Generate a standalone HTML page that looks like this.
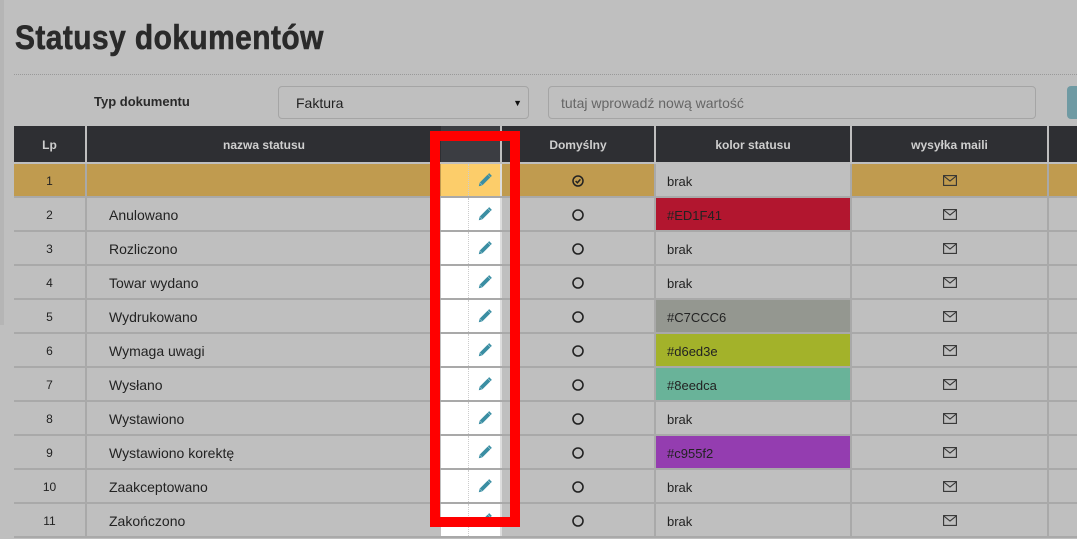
<!DOCTYPE html><html><head><meta charset="utf-8"><style>
*{margin:0;padding:0;box-sizing:border-box}
body{width:1077px;height:533px;overflow:hidden;background:#bfbfbf;font-family:"Liberation Sans",sans-serif;position:relative;color:#222}
.a{position:absolute}
h1{position:absolute;left:15px;top:19px;font-size:34px;font-weight:bold;color:#2a2a2a;transform:scaleX(0.88);transform-origin:0 0;letter-spacing:0.5px;-webkit-text-stroke:0.6px #2a2a2a}
.hdr{position:absolute;top:126px;height:36px;background:#2e2f33;color:#cfcfcf;font-size:12px;font-weight:bold;text-align:center;line-height:38px}
.c{position:absolute;height:32px;line-height:35px;font-size:14px}
.sep{position:absolute;background:#a9a9a9}
</style></head><body>
<div class="a" style="left:0;top:0;width:4px;height:325px;background:#b5b5b5"></div>
<h1>Statusy dokumentów</h1>
<div class="a" style="left:14px;top:74px;width:1063px;border-top:1px dotted #999"></div>
<div class="a" style="left:94px;top:94px;font-size:13px;font-weight:bold;color:#2a2a2a">Typ dokumentu</div>
<div class="a" style="left:278px;top:86px;width:251px;height:33px;border:1px solid #a5a5a5;border-radius:4px;font-size:14px;line-height:33px;padding-left:17px">Faktura<span style="position:absolute;right:6px;font-size:9px;color:#111">▼</span></div>
<div class="a" style="left:548px;top:86px;width:488px;height:33px;border:1px solid #a5a5a5;border-radius:4px;font-size:14px;line-height:33px;padding-left:12px;color:#666">tutaj wprowadź nową wartość</div>
<div class="a" style="left:1067px;top:86px;width:12px;height:33px;background:#6f9aa3;border-radius:4px 0 0 4px"></div>
<div class="hdr" style="left:14px;width:71px">Lp</div>
<div class="hdr" style="left:87px;width:354px">nazwa statusu</div>
<div class="hdr" style="left:441px;width:59px;background:#3b3d42"></div>
<div class="hdr" style="left:502px;width:152px">Domyślny</div>
<div class="hdr" style="left:656px;width:194px">kolor statusu</div>
<div class="hdr" style="left:852px;width:195px">wysyłka maili</div>
<div class="hdr" style="left:1049px;width:28px"></div>
<div id="rows"></div>
<script>
var names=["","Anulowano","Rozliczono","Towar wydano","Wydrukowano","Wymaga uwagi","Wysłano","Wystawiono","Wystawiono korektę","Zaakceptowano","Zakończono"];
var cols=[null,["#b2162f","#ED1F41"],null,null,["#949790","#C7CCC6"],["#a3b22a","#d6ed3e"],["#69b399","#8eedca"],null,["#943db0","#c955f2"],null,null];
var pen='<svg width="16" height="16" viewBox="0 0 18 18"><path d="M2 16 L3 12 L12 3 L15 6 L6 15 Z" fill="#3a8ea3"/><path d="M3 12 L6 15" stroke="#fff" stroke-opacity="0.4" stroke-width="0.8"/><path d="M13 2 L16 5" stroke="#3a8ea3" stroke-width="2"/></svg>';
var mail='<svg width="14" height="11" viewBox="0 0 14 11"><rect x="0.6" y="0.6" width="12.8" height="9.8" fill="none" stroke="#333" stroke-width="1.1"/><path d="M0.8 1 L7 6 L13.2 1" fill="none" stroke="#333" stroke-width="1.1"/></svg>';
var h="";
for(var i=0;i<11;i++){var t=164+i*34;var g=i==0;
var bg=g?"#c09b4f":"#bfbfbf";
h+='<div class="sep" style="left:14px;top:'+(t+32)+'px;width:1063px;height:2px"></div>';
h+='<div class="c" style="left:14px;top:'+t+'px;width:71px;text-align:center;font-size:12px;background:'+bg+'">'+(i+1)+'</div>';
h+='<div class="sep" style="left:85px;top:'+t+'px;width:2px;height:32px"></div>';
h+='<div class="c" style="left:87px;top:'+t+'px;width:354px;padding-left:22px;background:'+bg+'">'+names[i]+'</div>';
h+='<div class="c" style="left:441px;top:'+t+'px;width:59px;background:'+(g?"#fccd6a":"#fff")+'"><div style="position:absolute;left:27px;top:0;height:32px;border-left:1px dotted #ccc"></div><div style="position:absolute;left:36px;top:8px;line-height:0">'+pen+'</div></div>';
h+='<div class="sep" style="left:500px;top:'+t+'px;width:2px;height:32px;background:#ddd"></div>';
h+='<div class="c" style="left:502px;top:'+t+'px;width:152px;text-align:center;background:'+bg+'"><span style="position:relative;top:-1px">'+(g?'<svg width="12" height="12" viewBox="0 0 12 12" style="vertical-align:middle"><circle cx="6" cy="6" r="5" fill="none" stroke="#222" stroke-width="1.5"/><path d="M3.6 6 L5.4 7.8 L8.4 4.4" fill="none" stroke="#222" stroke-width="1.5"/></svg>':'<svg width="12" height="12" viewBox="0 0 12 12" style="vertical-align:middle"><circle cx="6" cy="6" r="5" fill="none" stroke="#222" stroke-width="1.6"/></svg>')+'</span></div>';
h+='<div class="sep" style="left:654px;top:'+t+'px;width:2px;height:32px"></div>';
var cc=cols[i];
h+='<div class="c" style="left:656px;top:'+t+'px;width:194px;padding-left:11px;font-size:13px;background:'+(cc?cc[0]:"#bfbfbf")+'">'+(cc?cc[1]:"brak")+'</div>';
h+='<div class="sep" style="left:850px;top:'+t+'px;width:2px;height:32px"></div>';
h+='<div class="c" style="left:852px;top:'+t+'px;width:195px;text-align:center;background:'+bg+'"><span style="position:relative;top:0px">'+mail+'</span></div>';
h+='<div class="sep" style="left:1047px;top:'+t+'px;width:2px;height:32px"></div>';
h+='<div class="c" style="left:1049px;top:'+t+'px;width:28px;background:'+bg+'"></div>';
}
document.getElementById("rows").innerHTML=h;
</script>
<div class="a" style="left:430px;top:131px;width:90px;height:396px;border:10px solid #ff0000"></div>
</body></html>
